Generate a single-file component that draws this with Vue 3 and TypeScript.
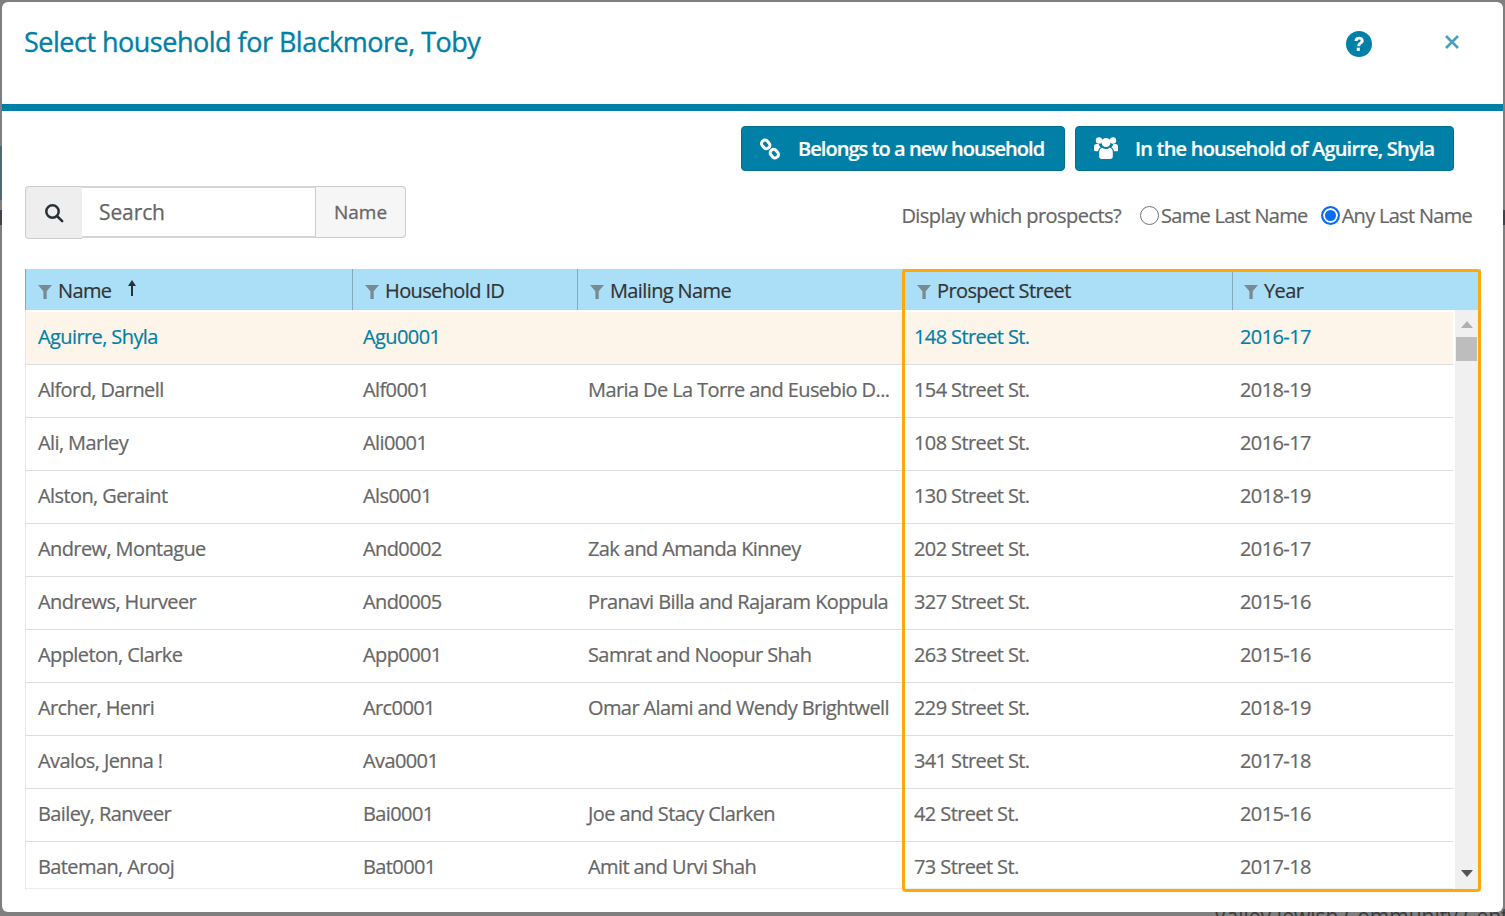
<script setup lang="ts">
interface Row { name: string; id: string; mail: string; street: string; year: string }
const rows: Row[] = [
  { name: 'Aguirre, Shyla', id: 'Agu0001', mail: '', street: '148 Street St.', year: '2016-17' },
  { name: 'Alford, Darnell', id: 'Alf0001', mail: 'Maria De La Torre and Eusebio D...', street: '154 Street St.', year: '2018-19' },
  { name: 'Ali, Marley', id: 'Ali0001', mail: '', street: '108 Street St.', year: '2016-17' },
  { name: 'Alston, Geraint', id: 'Als0001', mail: '', street: '130 Street St.', year: '2018-19' },
  { name: 'Andrew, Montague', id: 'And0002', mail: 'Zak and Amanda Kinney', street: '202 Street St.', year: '2016-17' },
  { name: 'Andrews, Hurveer', id: 'And0005', mail: 'Pranavi Billa and Rajaram Koppula', street: '327 Street St.', year: '2015-16' },
  { name: 'Appleton, Clarke', id: 'App0001', mail: 'Samrat and Noopur Shah', street: '263 Street St.', year: '2015-16' },
  { name: 'Archer, Henri', id: 'Arc0001', mail: 'Omar Alami and Wendy Brightwell', street: '229 Street St.', year: '2018-19' },
  { name: 'Avalos, Jenna !', id: 'Ava0001', mail: '', street: '341 Street St.', year: '2017-18' },
  { name: 'Bailey, Ranveer', id: 'Bai0001', mail: 'Joe and Stacy Clarken', street: '42 Street St.', year: '2015-16' },
  { name: 'Bateman, Arooj', id: 'Bat0001', mail: 'Amit and Urvi Shah', street: '73 Street St.', year: '2017-18' },
]
const heads = ['Name', 'Household ID', 'Mailing Name', 'Prospect Street', 'Year']
</script>

<template>
  <div class="page">
    <div class="behind">Valley Jewish Community Center</div>
    <i class="band band-a"></i>
    <i class="band band-b"></i>
    <i class="band band-c"></i>
    <div class="modal">
      <header class="head">
        <h1>Select household for Blackmore, Toby</h1>
        <svg class="help" width="26" height="26" viewBox="0 0 26 26">
          <circle cx="13" cy="13" r="13" fill="#0080a6" />
          <path d="M8.400 10c.3-2.700 2.200-4.200 4.700-4.200 2.700 0 4.600 1.600 4.600 3.900 0 1.800-1 2.600-2.200 3.400-1 .7-1.300 1.100-1.300 2.200h-2.900c0-2 .6-3 1.900-3.900.9-.7 1.500-1 1.500-1.700 0-.8-.7-1.300-1.500-1.300-.9 0-1.500.6-1.700 1.700z" fill="#fff" />
          <rect x="10.700" y="16.700" width="3.100" height="3.200" fill="#fff" />
        </svg>
        <svg class="close" width="16" height="16" viewBox="0 0 16 16">
          <path d="M2 2l12 12M14 2L2 14" stroke="#4a9fb9" stroke-width="2.600" fill="none" />
        </svg>
      </header>

      <div class="actions">
        <button class="btn btn-new" type="button">
          <svg width="22" height="22" viewBox="0 0 22 22" fill="none" stroke="#fff" stroke-width="3">
            <rect x="2.200" y="3" width="9" height="6.800" rx="3.200" transform="rotate(50 6.700 6.400)" />
            <rect x="10.800" y="12.200" width="9" height="6.800" rx="3.200" transform="rotate(50 15.300 15.600)" />
          </svg>
          <span>Belongs to a new household</span>
        </button>
        <button class="btn btn-in" type="button">
          <svg class="users" width="24" height="24" viewBox="0 0 24 24" fill="#fff">
            <circle cx="5" cy="4.500" r="3.200" />
            <circle cx="19" cy="4.500" r="3.200" />
            <circle cx="12" cy="6.500" r="4.500" />
            <path d="M0 10.500c0-1.600 1-2.500 2.200-2.500h2.500c.3 1.300 1 2.500 2 3.300-1.500 1-2.400 2.400-2.600 4H1.800C.7 15.300 0 14.600 0 13.600z" />
            <path d="M24 10.500c0-1.600-1-2.500-2.200-2.500h-2.500c-.3 1.300-1 2.500-2 3.300 1.500 1 2.400 2.400 2.600 4h2.900c1.100 0 1.800-.7 1.800-1.700z" />
            <path d="M8.300 11.800c1 .8 2.300 1.200 3.700 1.200s2.700-.4 3.700-1.200c2 .4 3.100 2 3.100 4.600v4.200c0 1.400-1 2.400-2.400 2.400H7.600c-1.400 0-2.400-1-2.400-2.400v-4.200c0-2.600 1.100-4.200 3.100-4.600z" />
          </svg>
          <span>In the household of Aguirre, Shyla</span>
        </button>
      </div>

      <div class="tools">
        <div class="search">
          <span class="addon-icon">
            <svg width="20" height="20" viewBox="0 0 20 20" fill="none" stroke="#263238" stroke-width="2.500">
              <circle cx="8.500" cy="8.500" r="6.200" />
              <path d="M13 13l5.200 5.200" stroke-linecap="round" />
            </svg>
          </span>
          <span class="field">Search</span>
          <span class="addon-name">Name</span>
        </div>
        <div class="display">
          <span class="question">Display which prospects?</span>
          <span class="radio-item"><i class="radio"></i>Same Last Name</span>
          <span class="radio-item"><i class="radio on"></i>Any Last Name</span>
        </div>
      </div>

      <div class="table">
        <div class="thead">
          <div v-for="h in heads" :key="h" class="th">
            <svg class="funnel" width="14" height="14" viewBox="0 0 14 14"><path d="M0 0h14L8.700 6.200V14H5.400V6.200z" fill="#7a8a92" /></svg>
            <span>{{ h }}</span>
            <svg v-if="h === 'Name'" class="arrow" width="12" height="18" viewBox="0 0 12 18"><path d="M6 1L2 7h3v10h2V7h3z" fill="#263238" /></svg>
          </div>
        </div>
        <div class="tbody">
          <div class="rows">
            <div v-for="(r, i) in rows" :key="r.id" class="tr" :class="{ selected: i === 0 }">
              <div class="td c1">{{ r.name }}</div>
              <div class="td c2">{{ r.id }}</div>
              <div class="td c3">{{ r.mail }}</div>
              <div class="td c4">{{ r.street }}</div>
              <div class="td c5">{{ r.year }}</div>
            </div>
          </div>
          <div class="scroll">
            <i class="up"></i>
            <i class="thumb"></i>
            <i class="down"></i>
          </div>
        </div>
        <div class="highlight"></div>
      </div>
    </div>
  </div>
</template>

<style>
html, body { margin: 0; background: #7f7f7f; overflow: hidden; }
</style>

<style scoped>
.page {
  width: 1505px;
  height: 916px;
  box-sizing: border-box;
  padding: 2px 2px 4px;
  position: relative;
  overflow: hidden;
  background: #7f7f7f;
  font-family: "Open Sans", "Noto Sans", sans-serif;
  color: #666;
}
.behind {
  position: absolute;
  left: 1214px;
  top: 902px;
  font-size: 21px;
  color: #3a3a3a;
  white-space: nowrap;
}
.band { position: absolute; display: block; width: 2px; }
.band-a { left: 0; top: 146px; height: 54px; background: #4e6a75; }
.band-b { left: 0; top: 210px; height: 15px; background: #3e444a; }
.band-c { right: 0; top: 210px; height: 15px; background: #3e444a; }
.modal {
  position: relative;
  height: 910px;
  background: #fff;
  border-radius: 6px;
  overflow: hidden;
}
.head {
  height: 102px;
  border-bottom: 7px solid #0080a6;
  display: flex;
  align-items: flex-start;
  padding: 0 43px 0 22px;
}
h1 {
  margin: 20px 0 0;
  font-size: 27px;
  line-height: 40px;
  font-weight: 400;
  letter-spacing: -0.5px;
  color: #0080a6;
  flex: 1;
  -webkit-text-stroke: 0.35px #0080a6;
}
.help { margin-top: 29px; }
.close { margin: 32px 0 0 72px; }
.actions {
  display: flex;
  justify-content: flex-end;
  gap: 10px;
  padding: 15px 49px 0 0;
}
.btn {
  height: 45px;
  box-sizing: border-box;
  display: flex;
  align-items: center;
  background: #0080a6;
  border: 1px solid #006f90;
  border-radius: 4px;
  color: #fff;
  font-family: inherit;
  font-size: 20px;
  font-weight: 600;
  letter-spacing: -0.95px;
  -webkit-text-stroke: 0.2px #fff;
  padding: 0;
}
.btn-new { width: 324px; padding-left: 17px; }
.btn-new span { margin-left: 17px; }
.btn-in { width: 379px; padding-left: 18px; letter-spacing: -0.8px; }
.btn-in span { margin-left: 17px; }
.users { margin-top: -2px; }
.tools {
  display: flex;
  justify-content: space-between;
  height: 53px;
  padding: 15px 31px 0 23px;
}
.search {
  display: flex;
  height: 53px;
  width: 381px;
  box-sizing: border-box;
  font-size: 20px;
}
.addon-icon {
  width: 57px;
  height: 53px;
  box-sizing: border-box;
  background: #eee;
  border: 1px solid #ccc;
  border-right: none;
  border-radius: 4px 0 0 4px;
  display: flex;
  align-items: center;
  justify-content: center;
}
.field {
  width: 234px;
  height: 52px;
  box-sizing: border-box;
  border: 2px solid #d5d5d5;
  border-left: none;
  border-right: 1px solid #ccc;
  padding-left: 17px;
  line-height: 48px;
  font-size: 21px;
  letter-spacing: -0.1px;
  color: #666;
  -webkit-text-stroke: 0.25px #666;
}
.addon-name {
  width: 90px;
  height: 52px;
  box-sizing: border-box;
  background: #f6f6f6;
  border: 1px solid #ccc;
  border-left: none;
  border-radius: 0 4px 4px 0;
  text-align: center;
  line-height: 50px;
  font-size: 19px;
  -webkit-text-stroke: 0.3px #666;
}
.display {
  display: flex;
  align-items: center;
  height: 60px;
  font-size: 20px;
  margin-top: -1px;
  color: #666;
  letter-spacing: -0.7px;
  -webkit-text-stroke: 0.2px #666;
}
.question { margin-right: 19px; letter-spacing: -0.55px; }
.radio-item { display: flex; align-items: center; margin-right: 13px; }
.radio-item:last-child { margin-right: 0; }
.radio {
  width: 19px;
  height: 19px;
  box-sizing: border-box;
  border-radius: 50%;
  border: 1px solid #767676;
  background: #fff;
  margin-right: 2px;
}
.radio.on {
  border: 2px solid #0a6cf5;
  box-shadow: inset 0 0 0 2px #fff;
  background: #0a6cf5;
}
.table {
  position: relative;
  margin: 30px 0 0 23px;
  width: 1456px;
}
.thead {
  display: grid;
  grid-template-columns: 326px 225px 326px 329px 1fr;
  height: 41px;
  background: #abdff8;
  border-left: 1px solid #84a9bb;
  box-sizing: border-box;
}
.th {
  display: flex;
  align-items: center;
  border-left: 1px solid #84a9bb;
  padding: 2px 0 0 12px;
  font-size: 20px;
  letter-spacing: -0.62px;
  color: #333;
  -webkit-text-stroke: 0.2px #333;
}
.th:first-child { border-left: none; }
.th:nth-child(4) { padding-left: 13px; }
.th:last-child { padding-left: 11px; }
.funnel { margin-right: 6px; margin-top: 3px; flex: none; }
.arrow { margin-left: 15px; margin-top: -6px; }
.tbody {
  display: flex;
  height: 580px;
  overflow: hidden;
}
.rows {
  width: 1428px;
  flex: none;
  border-left: 1px solid #e6e6e6;
  box-sizing: border-box;
  padding-top: 2px;
}
.tr {
  display: grid;
  grid-template-columns: 327px 225px 326px 326px 1fr;
  height: 53px;
  box-sizing: border-box;
  border-bottom: 1px solid #ddd;
  font-size: 20px;
  letter-spacing: -0.6px;
  align-items: start;
  color: #666;
  -webkit-text-stroke: 0.2px currentColor;
}
.tr:last-child { height: 47px; border-bottom: 1px solid #eee; }
.tr.selected { background: #fef5ea; color: #0080a6; }
.td { padding-left: 12px; line-height: 49px; white-space: nowrap; overflow: hidden; }
.c2, .c3, .c4, .c5 { padding-left: 10px; }
.scroll {
  width: 23px;
  margin-left: 2px;
  background: #f0f0f0;
  position: relative;
}
.scroll i { position: absolute; display: block; }
.up {
  left: 6px;
  top: 11px;
  border-left: 6px solid transparent;
  border-right: 6px solid transparent;
  border-bottom: 7px solid #b0b0b0;
}
.thumb {
  left: 1px;
  top: 27px;
  width: 21px;
  height: 24px;
  background: #bdbdbd;
}
.down {
  left: 6px;
  bottom: 13px;
  border-left: 6px solid transparent;
  border-right: 6px solid transparent;
  border-top: 7px solid #555;
}
.highlight {
  position: absolute;
  left: 877px;
  top: 0;
  width: 579px;
  height: 623px;
  box-sizing: border-box;
  border: 3px solid #ffa807;
  border-radius: 4px;
  pointer-events: none;
}
</style>
